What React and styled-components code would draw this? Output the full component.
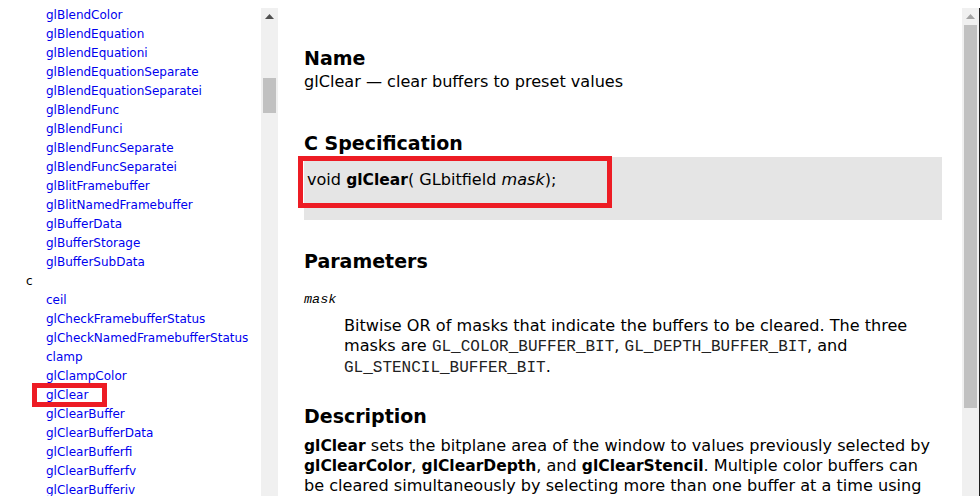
import React from "react";
import styled, { createGlobalStyle } from "styled-components";

const GlobalStyle = createGlobalStyle`
  html, body {
    margin: 0;
    padding: 0;
    background: #ffffff;
    overflow: hidden;
  }
  body {
    padding-top: 8px;
    height: 488px;
    font-family: "DejaVu Sans", Verdana, sans-serif;
    color: #000000;
  }
`;

const Page = styled.div`
  display: flex;
  height: 488px;
`;

const Pane = styled.div`
  display: flex;
  width: ${(p) => p.width}px;
  height: 100%;
  overflow: hidden;
  border-right: ${(p) => (p.edge ? "1px solid #1e1e1e" : "none")};
  flex: ${(p) => (p.grow ? 1 : "none")};
`;

const Scroller = styled.div`
  flex: 1;
  min-width: 0;
  overflow: hidden;
`;

const Track = styled.div`
  width: 17px;
  flex: none;
  display: flex;
  flex-direction: column;
  align-items: center;
  background: #f0f0f0;
`;

const Arrow = styled.div`
  height: 17px;
  width: 17px;
  display: flex;
  align-items: center;
  justify-content: center;
  flex: none;
`;

const Thumb = styled.div`
  width: 13px;
  flex: none;
  background: #c1c1c1;
`;

const Scrollbar = ({ top, size, dim }) => (
  <Track>
    <Arrow>
      <svg width="9" height="5" viewBox="0 0 9 5">
        <path d="M0 5 L4.5 0 L9 5 Z" fill={dim ? "#a3a3a3" : "#505050"} />
      </svg>
    </Arrow>
    <Thumb style={{ marginTop: top, height: size }} />
  </Track>
);

/* sidebar */

const List = styled.ul`
  list-style: none;
  margin: -2px 0 0 0;
  padding: 0;
  font-size: 12px;
`;

const Letter = styled.li`
  height: 19px;
  line-height: 19px;
  padding-left: 26px;
  color: #000000;
`;

const Item = styled.li`
  position: relative;
  height: 19px;
  line-height: 19px;
  padding-left: 46px;
`;

const Link = styled.a`
  color: #0000ee;
  text-decoration: none;
  white-space: nowrap;
`;

const Mark = styled.span`
  position: absolute;
  box-sizing: border-box;
  border: 5px solid #ed1c24;
  pointer-events: none;
`;

const SideMark = styled(Mark)`
  left: 32px;
  top: -3px;
  width: 75px;
  height: 24px;
`;

/* main */

const Content = styled.div`
  padding: 38px 20px 0 26px;
`;

const Heading = styled.h2`
  margin: 0;
  font-weight: bold;
  font-size: 19px;
  line-height: 24px;
`;

const Section = styled.section`
  margin-bottom: ${(p) => p.gap}px;
`;

const Text = styled.p`
  margin: ${(p) => p.top || 0}px 0 0 ${(p) => p.indent || 0}px;
  font-size: 16.1px;
  line-height: ${(p) => p.lh || 20}px;
  white-space: nowrap;
`;

const B = styled.b`
  font-size: 15.5px;
`;

const Code = styled.code`
  font-family: "Liberation Mono", "Courier New", monospace;
  font-size: 16px;
  color: #222222;
`;

const Param = styled.em`
  display: block;
  margin-top: 17px;
  font-family: "Liberation Mono", "Courier New", monospace;
  font-size: 13.5px;
  line-height: 20px;
`;

const Synopsis = styled.div`
  position: relative;
  margin-top: 2px;
  background: #e5e5e5;
  padding: 13px 4px 30px 3px;
  font-size: 16.1px;
  line-height: 20px;
`;

const CodeMark = styled(Mark)`
  left: -6px;
  top: -1px;
  width: 314px;
  height: 52px;
`;

const Fn = styled.span`
  color: #0000ee;
`;

const sidebar = [
  "glBlendColor",
  "glBlendEquation",
  "glBlendEquationi",
  "glBlendEquationSeparate",
  "glBlendEquationSeparatei",
  "glBlendFunc",
  "glBlendFunci",
  "glBlendFuncSeparate",
  "glBlendFuncSeparatei",
  "glBlitFramebuffer",
  "glBlitNamedFramebuffer",
  "glBufferData",
  "glBufferStorage",
  "glBufferSubData",
  "c",
  "ceil",
  "glCheckFramebufferStatus",
  "glCheckNamedFramebufferStatus",
  "clamp",
  "glClampColor",
  "glClear",
  "glClearBuffer",
  "glClearBufferData",
  "glClearBufferfi",
  "glClearBufferfv",
  "glClearBufferiv",
];

export default function App() {
  return (
    <>
      <GlobalStyle />
      <Page>
        <Pane width={278}>
          <Scroller>
            <List>
              {sidebar.map((name) =>
                name.length === 1 ? (
                  <Letter key={name}>{name}</Letter>
                ) : (
                  <Item key={name}>
                    <Link href="#">{name}</Link>
                    {name === "glClear" && <SideMark />}
                  </Item>
                )
              )}
            </List>
          </Scroller>
          <Scrollbar top={53} size={35} />
        </Pane>

        <Pane grow edge>
          <Scroller>
            <Content>
              <Section gap={39}>
                <Heading>Name</Heading>
                <Text top={2}>glClear — clear buffers to preset values</Text>
              </Section>

              <Section gap={29}>
                <Heading>C Specification</Heading>
                <Synopsis>
                  void <B>glClear</B>( GLbitfield <em>mask</em>);
                  <CodeMark />
                </Synopsis>
              </Section>

              <Section gap={26}>
                <Heading>Parameters</Heading>
                <Param>mask</Param>
                <Text top={6} indent={40}>
                  Bitwise OR of masks that indicate the buffers to be cleared. The three
                  <br />
                  masks are <Code>GL_COLOR_BUFFER_BIT</Code>, <Code>GL_DEPTH_BUFFER_BIT</Code>, and
                  <br />
                  <Code>GL_STENCIL_BUFFER_BIT</Code>.
                </Text>
              </Section>

              <Section gap={0}>
                <Heading>Description</Heading>
                <Text top={8} lh={19}>
                  <B>glClear</B> sets the bitplane area of the window to values previously selected by
                  <br />
                  <B>glClearColor</B>, <B>glClearDepth</B>, and <B>glClearStencil</B>. Multiple color buffers can
                  <br />
                  be cleared simultaneously by selecting more than one buffer at a time using
                  <br />
                  <Fn>glDrawBuffers</Fn>. The pixel ownership test, the scissor test, dithering, and the
                </Text>
              </Section>
            </Content>
          </Scroller>
          <Scrollbar dim top={0} size={383} />
        </Pane>
      </Page>
    </>
  );
}
